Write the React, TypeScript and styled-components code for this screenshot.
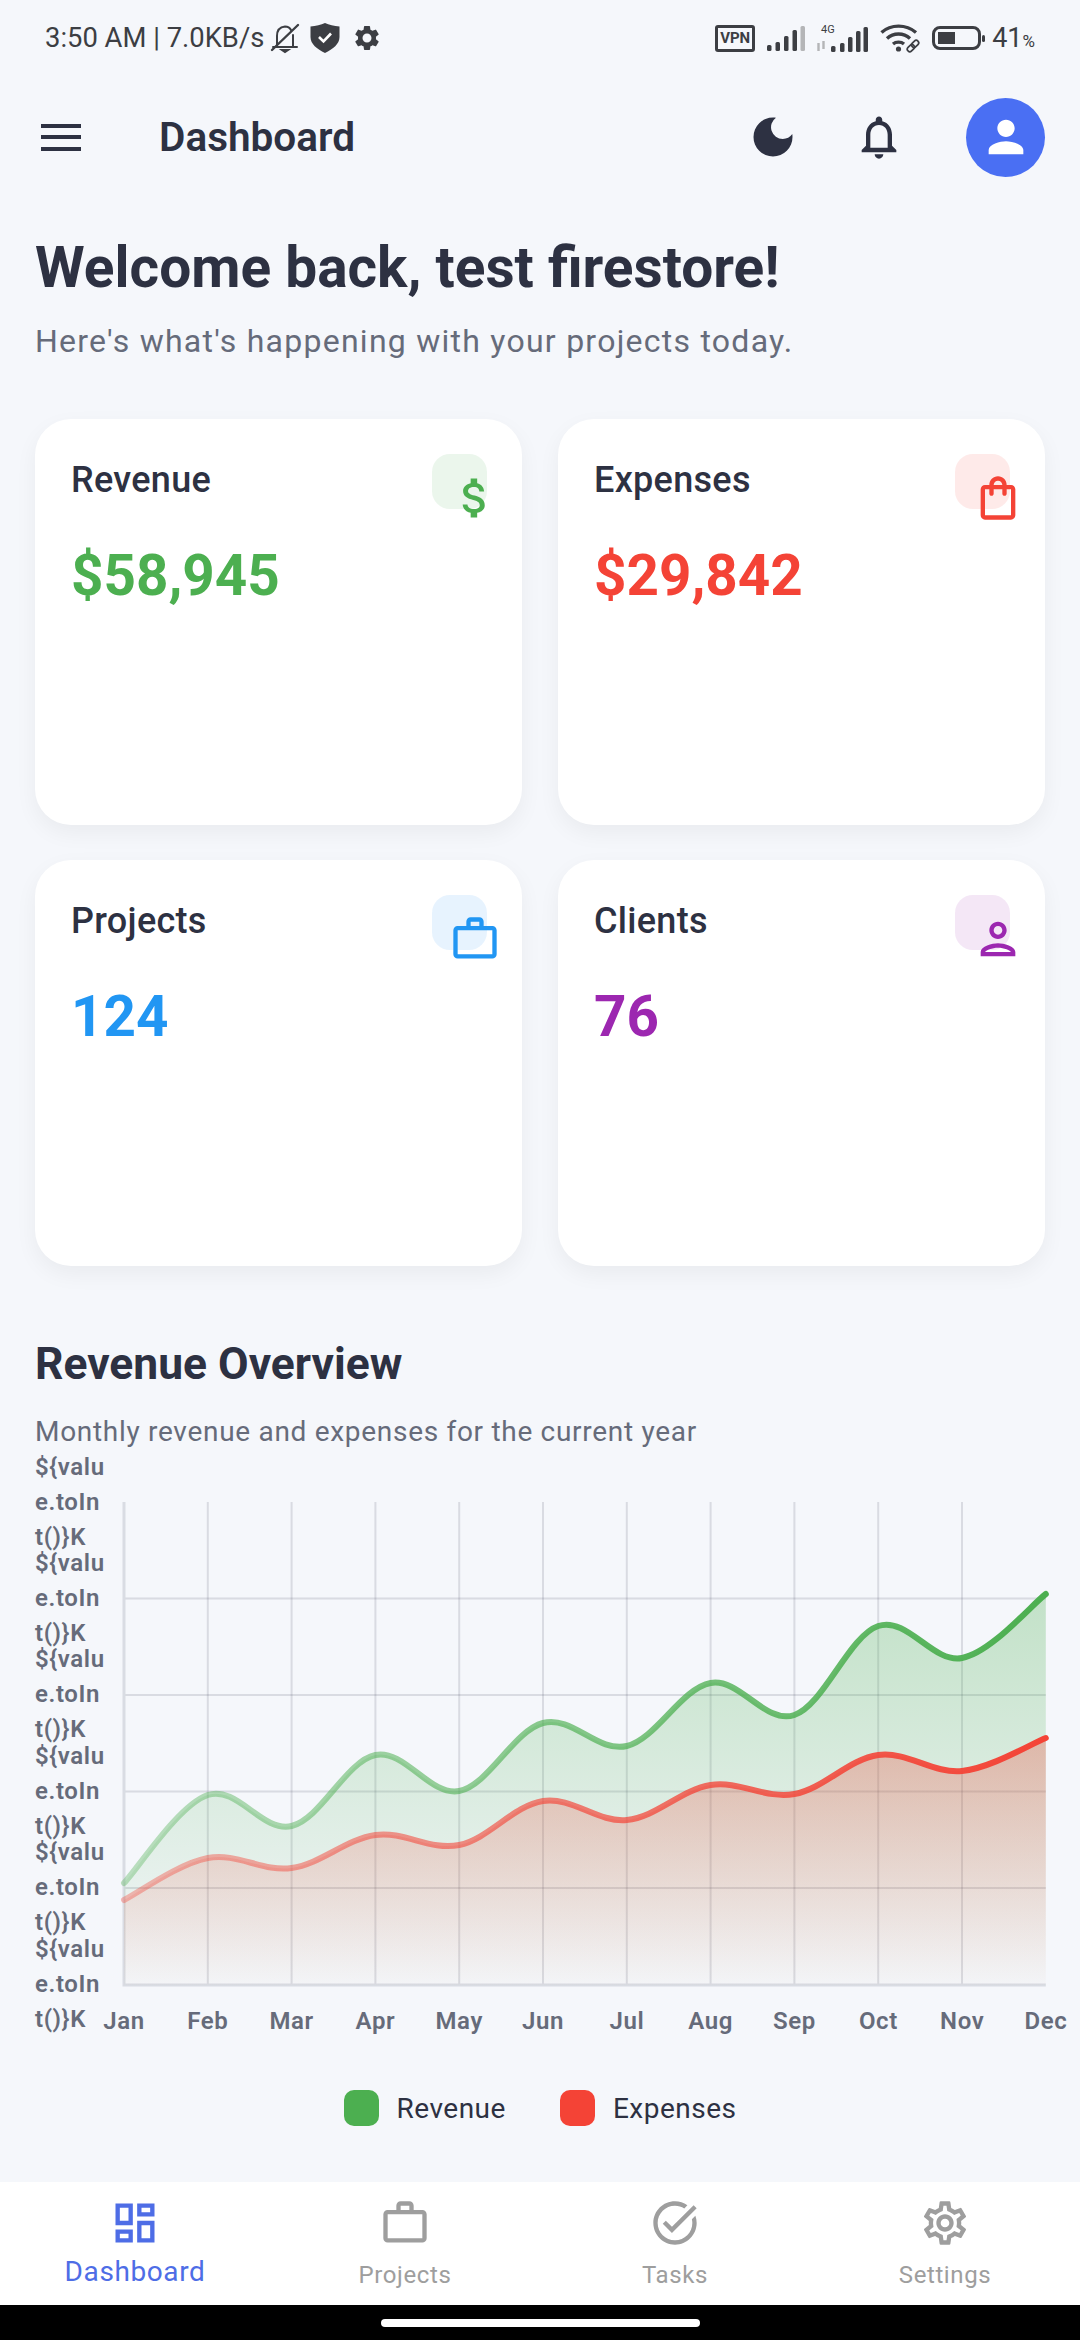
import React from 'react'
import styled, { createGlobalStyle } from 'styled-components'
import {
  MdAttachMoney,
  MdDarkMode,
  MdOutlineDashboard,
  MdOutlineNotificationsNone,
  MdOutlinePerson,
  MdOutlineSettings,
  MdOutlineShoppingBag,
  MdOutlineTaskAlt,
  MdPerson,
  MdSettings,
  MdWorkOutline,
} from 'react-icons/md'

const GlobalStyle = createGlobalStyle`
  html, body {
    margin: 0;
    padding: 0;
    background: #f5f7fb;
  }
  body {
    font-family: Roboto, "Liberation Sans", sans-serif;
    overflow: hidden;
  }
  * {
    box-sizing: border-box;
  }
`

const Screen = styled.div`
  width: 1080px;
  height: 2340px;
  display: flex;
  flex-direction: column;
  overflow: hidden;
  background: #f5f7fb;
`

const StatusBar = styled.div`
  height: 76px;
  flex: none;
  display: flex;
  align-items: center;
  justify-content: space-between;
  padding: 0 45px;
  color: #3c3e43;
`
const StatusGroup = styled.div`
  display: flex;
  align-items: center;
`
const StatusTime = styled.span`
  font-size: 27.4px;
  margin-right: 6px;
`
const VpnBadge = styled.span`
  width: 40px;
  height: 27px;
  border: 3px solid #3c3e43;
  border-radius: 3px;
  font-size: 15px;
  font-weight: 700;
  display: flex;
  align-items: center;
  justify-content: center;
  margin-right: 12px;
`
const Battery = styled.div`
  width: 49px;
  height: 24px;
  border: 3px solid #3c3e43;
  border-radius: 8px;
  padding: 3px;
  margin-left: 11px;
  position: relative;
  &::after {
    content: '';
    position: absolute;
    right: -7px;
    top: 6px;
    width: 3px;
    height: 7px;
    background: #3c3e43;
    border-radius: 2px;
  }
`
const BatteryLevel = styled.div`
  width: 17px;
  height: 100%;
  background: #3c3e43;
`
const BatteryText = styled.span`
  font-size: 27px;
  margin-left: 11px;
  small {
    font-size: 17px;
  }
`

const AppBar = styled.div`
  height: 122px;
  flex: none;
  display: flex;
  align-items: center;
  padding: 0 35px 0 29px;
  color: #2d3142;
`
const MenuBars = styled.div`
  width: 40px;
  height: 27px;
  margin-left: 12px;
  display: flex;
  flex-direction: column;
  justify-content: space-between;
  span {
    height: 4px;
    background: #2d3142;
  }
`
const AppTitle = styled.h1`
  margin: 0 0 0 78px;
  font-size: 40.5px;
  font-weight: 600;
  flex: 1;
`
const AppActions = styled.div`
  display: flex;
  align-items: center;
  gap: 54px;
`
const Avatar = styled.div`
  width: 79px;
  height: 79px;
  margin-left: 61px;
  border-radius: 50%;
  background: #4a6ff3;
  color: #fff;
  display: flex;
  align-items: center;
  justify-content: center;
`

const Content = styled.main`
  flex: 1;
  min-height: 0;
  padding: 35px 35px 0;
`
const Welcome = styled.h2`
  margin: 0;
  font-size: 56.8px;
  line-height: 70px;
  font-weight: 700;
  color: #2d3142;
`
const Lead = styled.p`
  margin: 18px 0 0;
  font-size: 32px;
  line-height: 40px;
  letter-spacing: 1.25px;
  color: #666b7a;
`
const Cards = styled.section`
  margin-top: 58px;
  display: grid;
  grid-template-columns: 487px 487px;
  grid-auto-rows: 406px;
  gap: 35px 36px;
`
const Card = styled.article`
  background: #fff;
  border-radius: 36px;
  padding: 35px 35px 35px 36px;
  box-shadow: 0 8px 22px rgba(0, 0, 0, 0.05);
`
const CardHead = styled.div`
  display: flex;
  justify-content: space-between;
  align-items: flex-start;
`
const CardLabel = styled.span`
  margin-top: 4px;
  font-size: 36px;
  line-height: 44px;
  font-weight: 500;
  letter-spacing: 0.3px;
  color: #2d3142;
`
const IconBox = styled.div<{ $color: string }>`
  width: 55px;
  height: 55px;
  padding: 18px 0 0 17px;
  border-radius: 18px;
  color: ${(p) => p.$color};
  background: ${(p) => p.$color}1c;
  svg {
    display: block;
  }
`
const CardValue = styled.div<{ $color: string }>`
  margin-top: 34px;
  font-size: 56.6px;
  line-height: 66px;
  font-weight: 700;
  color: ${(p) => p.$color};
`

const SectionTitle = styled.h3`
  margin: 71px 0 0;
  font-size: 44.4px;
  line-height: 54px;
  font-weight: 700;
  color: #2d3142;
`
const SectionSub = styled.p`
  margin: 24px 0 0;
  font-size: 28px;
  line-height: 34px;
  letter-spacing: 0.7px;
  color: #666b7a;
`
const ChartGrid = styled.div`
  margin-top: 5px;
  display: grid;
  grid-template-columns: 89px 1fr;
  grid-template-rows: 531px auto;
`
const YAxis = styled.div`
  grid-row: 1 / span 2;
  display: flex;
  flex-direction: column;
`
const YLabel = styled.div`
  height: 96.4px;
  display: flex;
  align-items: center;
  span {
    width: 71px;
    flex: none;
    font-size: 24px;
    line-height: 35px;
    font-weight: 600;
    letter-spacing: 0.6px;
    color: #666b7a;
    word-break: break-all;
  }
`
const ChartSvg = styled.svg`
  display: block;
  margin-top: 48px;
  overflow: visible;
`
const XAxis = styled.div`
  display: flex;
  margin-left: -42px;
  margin-top: 18px;
  width: 1006px;
`
const XLabel = styled.span`
  flex: 1 0 0;
  text-align: center;
  font-size: 24px;
  line-height: 36px;
  font-weight: 600;
  letter-spacing: 0.6px;
  color: #666b7a;
`
const Legend = styled.div`
  margin-top: 51px;
  display: flex;
  justify-content: center;
  gap: 54px;
`
const LegendItem = styled.div`
  display: flex;
  align-items: center;
  gap: 18px;
  font-size: 28px;
  letter-spacing: 0.5px;
  color: #2d3142;
`
const Swatch = styled.i<{ $color: string }>`
  display: block;
  width: 35px;
  height: 36px;
  border-radius: 10px;
  background: ${(p) => p.$color};
`

const BottomNav = styled.nav`
  height: 123px;
  flex: none;
  display: grid;
  grid-template-columns: repeat(4, 1fr);
  background: #fff;
  padding-top: 15px;
`
const NavItem = styled.div<{ $active?: boolean }>`
  display: flex;
  flex-direction: column;
  align-items: center;
  color: ${(p) => (p.$active ? '#4e6de6' : '#9e9e9e')};
  font-size: ${(p) => (p.$active ? '28px' : '24px')};
  line-height: 34px;
  letter-spacing: 0.6px;
  span {
    margin-top: ${(p) => (p.$active ? '6px' : '9px')};
  }
`
const GestureBar = styled.div`
  height: 35px;
  flex: none;
  background: #000;
  display: flex;
  justify-content: center;
  padding-top: 14px;
  &::after {
    content: '';
    width: 319px;
    height: 8px;
    border-radius: 4px;
    background: #fff;
  }
`

const months = ['Jan', 'Feb', 'Mar', 'Apr', 'May', 'Jun', 'Jul', 'Aug', 'Sep', 'Oct', 'Nov', 'Dec']
// y of each month in chart pixels, 0 = top grid line
const revenue = [381, 293, 324, 253, 289, 221, 244, 181, 213, 124, 156, 92]
const expenses = [398, 356, 366, 333, 343, 299, 318, 283, 292, 253, 269, 236]
const STEP = 83.8
const PLOT_W = STEP * 11
const PLOT_H = 483

const curve = (ys: number[]) => {
  const pts = ys.map((y, i) => [i * STEP, y])
  let d = `M${pts[0][0]} ${pts[0][1]}`
  for (let i = 1; i < pts.length; i++) {
    const prev2 = pts[Math.max(i - 2, 0)]
    const prev = pts[i - 1]
    const cur = pts[i]
    const next = pts[Math.min(i + 1, pts.length - 1)]
    const c1x = prev[0] + (cur[0] - prev2[0]) * 0.175
    const c1y = prev[1] + (cur[1] - prev2[1]) * 0.175
    const c2x = cur[0] - (next[0] - prev[0]) * 0.175
    const c2y = cur[1] - (next[1] - prev[1]) * 0.175
    d += ` C${c1x} ${c1y} ${c2x} ${c2y} ${cur[0]} ${cur[1]}`
  }
  return d
}

const Chart = () => {
  const series = [
    { id: 'rev', ys: revenue, color: '#4caf50' },
    { id: 'exp', ys: expenses, color: '#f44336' },
  ]
  return (
    <ChartSvg width={PLOT_W} height={PLOT_H} viewBox={`0 0 ${PLOT_W} ${PLOT_H}`}>
      <defs>
        {series.map((s) => (
          <React.Fragment key={s.id}>
            <linearGradient id={`${s.id}-fill`} gradientUnits="userSpaceOnUse" x1="0" x2="0" y1={Math.min(...s.ys)} y2={PLOT_H}>
              <stop offset="0" stopColor={s.color} stopOpacity="0.3" />
              <stop offset="1" stopColor={s.color} stopOpacity="0.01" />
            </linearGradient>
            <linearGradient id={`${s.id}-line`} gradientUnits="userSpaceOnUse" x1="0" x2={PLOT_W} y1="0" y2="0">
              <stop offset="0" stopColor={s.color} stopOpacity="0.35" />
              <stop offset="1" stopColor={s.color} stopOpacity="1" />
            </linearGradient>
          </React.Fragment>
        ))}
      </defs>
      {[1, 2, 3, 4].map((i) => (
        <line key={i} x1="0" x2={PLOT_W} y1={i * 96.5} y2={i * 96.5} stroke="rgba(60,60,85,0.15)" strokeWidth="2" />
      ))}
      {months.slice(1, 11).map((m, i) => (
        <line key={m} x1={(i + 1) * STEP} x2={(i + 1) * STEP} y1="0" y2={PLOT_H} stroke="rgba(60,60,85,0.15)" strokeWidth="2" />
      ))}
      <path d={`M0 0V${PLOT_H}H${PLOT_W}`} fill="none" stroke="#d9dce3" strokeWidth="3" />
      {series.map((s) => (
        <path key={s.id} d={`${curve(s.ys)} V${PLOT_H} H0 Z`} fill={`url(#${s.id}-fill)`} />
      ))}
      {series.map((s) => (
        <path key={s.id} d={curve(s.ys)} fill="none" stroke={`url(#${s.id}-line)`} strokeWidth="6" strokeLinecap="round" />
      ))}
    </ChartSvg>
  )
}

const MutedBell = () => (
  <svg width="30" height="32" viewBox="0 0 30 32" fill="none" stroke="#3c3e43" strokeWidth="2" style={{ marginRight: 10 }}>
    <path d="M7 24V14C7 8 10 5 15 4.5C18 4.5 20 6 21 8M23 13V24M3 25H27" strokeLinecap="round" />
    <path d="M2 28L28 3" strokeLinecap="round" strokeWidth="2.4" />
    <path d="M12 28H18L15 30Z" fill="#3c3e43" />
  </svg>
)
const ShieldCheck = () => (
  <svg width="30" height="30" viewBox="0 0 30 30" style={{ marginRight: 12 }}>
    <path d="M15 0C19 2 24 3 29.5 3.5V14C29.5 21 23 26 15 30C7 26 .5 21 .5 14V3.5C6 3 11 2 15 0Z" fill="#3c3e43" />
    <path d="M9 14L13.5 18.5L21 10.5" fill="none" stroke="#fff" strokeWidth="2.6" />
  </svg>
)
const Signal = () => (
  <svg width="38" height="26" viewBox="0 0 38 26" fill="#3c3e43">
    <rect x="0" y="20" width="4.5" height="6" rx="1.5" />
    <rect x="8.5" y="17" width="4.5" height="9" rx="1.5" />
    <rect x="17" y="11" width="4.5" height="15" rx="1.5" />
    <rect x="25.5" y="5" width="4.5" height="21" rx="1.5" />
    <rect x="33.5" y="1" width="4.5" height="25" rx="1.5" fill="#b4b5b7" />
  </svg>
)
const Signal4G = () => (
  <svg width="52" height="30" viewBox="0 0 52 30" style={{ margin: '0 12px 0 11px' }}>
    <text x="5" y="10" fontSize="11" fontFamily="Roboto, sans-serif" fill="#3c3e43">4G</text>
    <path d="M2.5 20V28M7.5 18V26" stroke="#b4b5b7" strokeWidth="2.4" />
    <g fill="#3c3e43">
      <rect x="15" y="23" width="4.5" height="6" rx="1.5" />
      <rect x="24" y="20" width="4.5" height="9" rx="1.5" />
      <rect x="32" y="14" width="4.5" height="15" rx="1.5" />
      <rect x="40" y="8" width="4.5" height="21" rx="1.5" />
      <rect x="47.5" y="4" width="4.5" height="25" rx="1.5" />
    </g>
  </svg>
)
const WifiLink = () => (
  <svg width="41" height="30" viewBox="0 0 41 30" fill="none" stroke="#3c3e43">
    <path d="M1.5 9.5C11 1 26 1 36 9.5" strokeWidth="3.4" />
    <path d="M7 15.5C13.5 9.5 23.5 9.5 30 15.5" strokeWidth="3.4" />
    <path d="M13 21C16 18.5 21 18.5 24 21" strokeWidth="3.4" />
    <circle cx="18.5" cy="26" r="2.6" fill="#3c3e43" stroke="none" />
    <g strokeWidth="1.7" transform="rotate(-45 33 23)">
      <rect x="26" y="20.5" width="8" height="5" rx="2.5" />
      <rect x="32" y="20.5" width="8" height="5" rx="2.5" />
    </g>
  </svg>
)

const stats = [
  { label: 'Revenue', value: '$58,945', color: '#4caf50', icon: <MdAttachMoney size={52} /> },
  { label: 'Expenses', value: '$29,842', color: '#f44336', icon: <MdOutlineShoppingBag size={52} /> },
  { label: 'Projects', value: '124', color: '#2196f3', icon: <MdWorkOutline size={52} /> },
  { label: 'Clients', value: '76', color: '#9c27b0', icon: <MdOutlinePerson size={52} /> },
]
const navItems = [
  { label: 'Dashboard', icon: <MdOutlineDashboard size={52} />, active: true },
  { label: 'Projects', icon: <MdWorkOutline size={52} /> },
  { label: 'Tasks', icon: <MdOutlineTaskAlt size={52} /> },
  { label: 'Settings', icon: <MdOutlineSettings size={52} /> },
]

const App = () => {
  return (
    <Screen>
      <GlobalStyle />
      <StatusBar>
        <StatusGroup>
          <StatusTime>3:50 AM | 7.0KB/s</StatusTime>
          <MutedBell />
          <ShieldCheck />
          <MdSettings size={30} />
        </StatusGroup>
        <StatusGroup>
          <VpnBadge>VPN</VpnBadge>
          <Signal />
          <Signal4G />
          <WifiLink />
          <Battery>
            <BatteryLevel />
          </Battery>
          <BatteryText>
            41<small>%</small>
          </BatteryText>
        </StatusGroup>
      </StatusBar>

      <AppBar>
        <MenuBars>
          <span />
          <span />
          <span />
        </MenuBars>
        <AppTitle>Dashboard</AppTitle>
        <AppActions>
          <MdDarkMode size={52} />
          <MdOutlineNotificationsNone size={52} />
        </AppActions>
        <Avatar>
          <MdPerson size={52} />
        </Avatar>
      </AppBar>

      <Content>
        <Welcome>Welcome back, test firestore!</Welcome>
        <Lead>Here's what's happening with your projects today.</Lead>
        <Cards>
          {stats.map((s) => (
            <Card key={s.label}>
              <CardHead>
                <CardLabel>{s.label}</CardLabel>
                <IconBox $color={s.color}>{s.icon}</IconBox>
              </CardHead>
              <CardValue $color={s.color}>{s.value}</CardValue>
            </Card>
          ))}
        </Cards>

        <SectionTitle>Revenue Overview</SectionTitle>
        <SectionSub>Monthly revenue and expenses for the current year</SectionSub>
        <ChartGrid>
          <YAxis>
            {[0, 1, 2, 3, 4, 5].map((i) => (
              <YLabel key={i}>
                <span>{'${value.toInt()}K'}</span>
              </YLabel>
            ))}
          </YAxis>
          <Chart />
          <XAxis>
            {months.map((m) => (
              <XLabel key={m}>{m}</XLabel>
            ))}
          </XAxis>
        </ChartGrid>
        <Legend>
          <LegendItem>
            <Swatch $color="#4caf50" />
            Revenue
          </LegendItem>
          <LegendItem>
            <Swatch $color="#f44336" />
            Expenses
          </LegendItem>
        </Legend>
      </Content>

      <BottomNav>
        {navItems.map((n) => (
          <NavItem key={n.label} $active={n.active}>
            {n.icon}
            <span>{n.label}</span>
          </NavItem>
        ))}
      </BottomNav>
      <GestureBar />
    </Screen>
  )
}

export default App
